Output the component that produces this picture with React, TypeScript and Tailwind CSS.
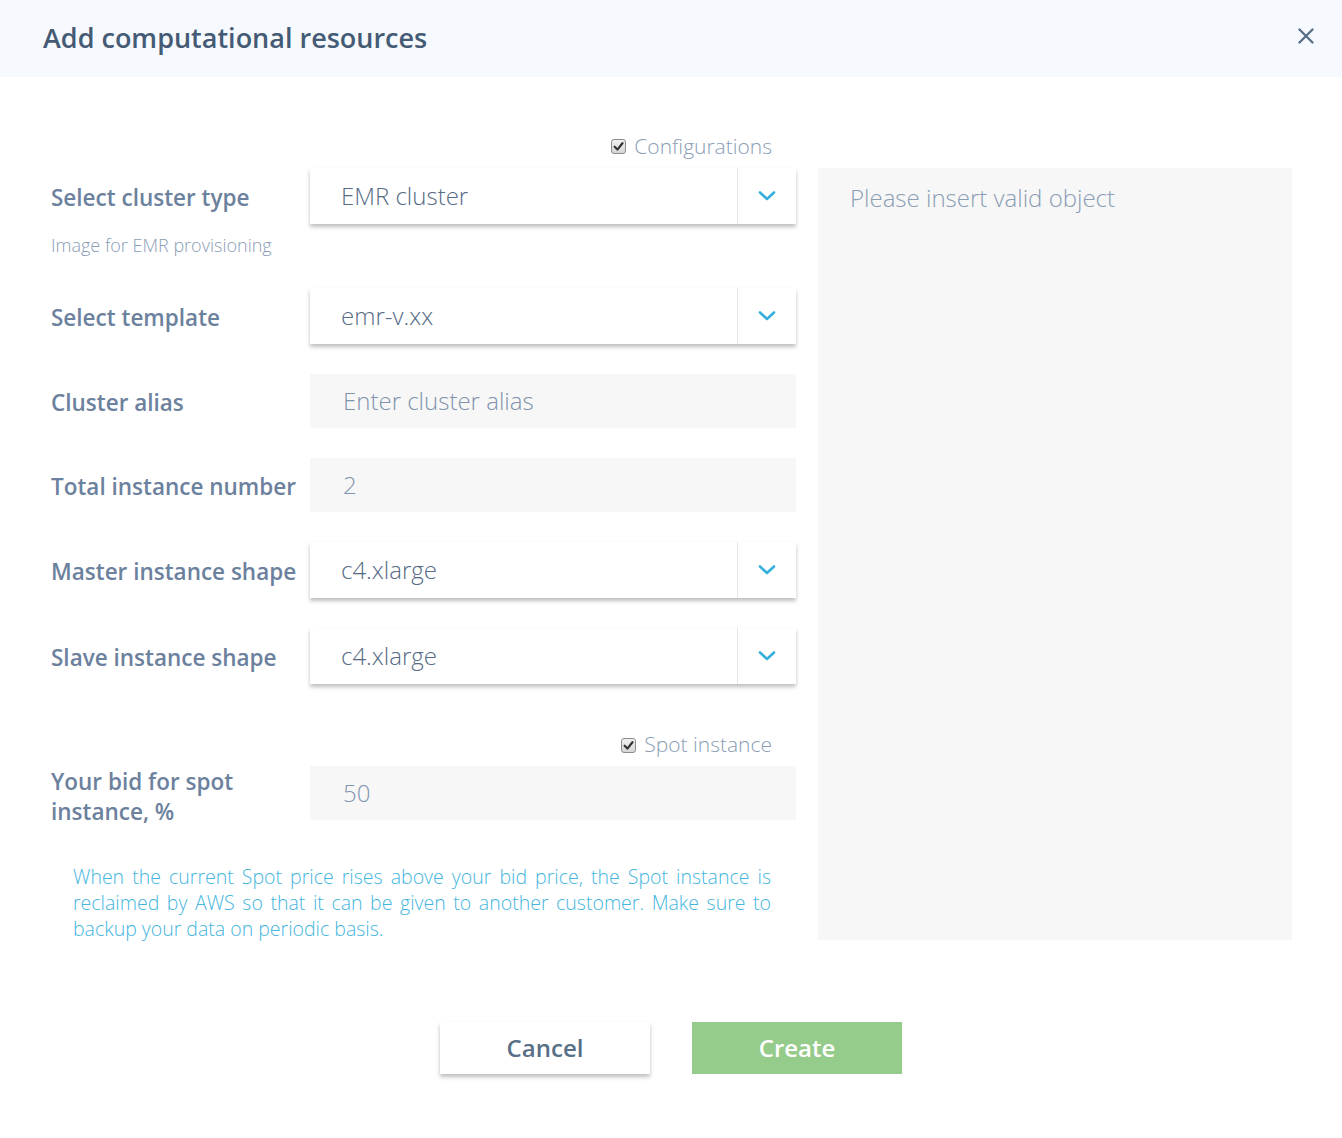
import React from 'react';

const font = { fontFamily: '"Open Sans", "Noto Sans", Arial, sans-serif' };

const Chevron = () => (
  <svg width="18" height="12" viewBox="0 0 18 12" fill="none">
    <path d="M2 2.5 L9 9 L16 2.5" stroke="#35b0dc" strokeWidth="2.6" strokeLinecap="round" strokeLinejoin="round" />
  </svg>
);

const Check = ({ label }: { label: string }) => (
  <div className="flex items-center justify-end gap-[8px] pr-[24px]">
    <span className="flex items-center justify-center w-[15px] h-[15px] rounded-[3px] border border-[#8d8d8d] bg-gradient-to-b from-[#f0f0f0] to-[#d6d6d6]">
      <svg width="11" height="11" viewBox="0 0 10 10">
        <path d="M1.5 5.2 L4 7.8 L8.6 2" stroke="#333" strokeWidth="2" fill="none" strokeLinecap="round" strokeLinejoin="round" />
      </svg>
    </span>
    <span className="text-[21px] font-light text-[#8a9db5]">{label}</span>
  </div>
);

const Select = ({ value }: { value: string }) => (
  <div className="flex h-[56px] bg-white shadow-[0_3px_4px_rgba(0,0,0,0.25)]">
    <div className="flex-1 flex items-center pl-[31px] text-[24px] font-light text-[#566b86]">{value}</div>
    <div className="w-[59px] flex items-center justify-center border-l border-[#e6e6e6]">
      <Chevron />
    </div>
  </div>
);

const Input = ({ value, placeholder }: { value?: string; placeholder?: string }) => (
  <div className="flex h-[54px] items-center bg-[#f7f7f7] pl-[33px] text-[24px] font-light text-[#7f93ad]">
    {value ?? placeholder}
  </div>
);

const Label = ({ children }: { children: React.ReactNode }) => (
  <div className="w-[259px] shrink-0 pt-[3px] text-[22.5px] font-semibold text-[#6c819d]">{children}</div>
);

export default function App() {
  return (
    <div className="w-full min-h-screen bg-white" style={font}>
      {/* header */}
      <div className="h-[77px] bg-[#f6f9fd] flex items-center justify-between pl-[43px] pr-[28px]">
        <h1 className="text-[27px] font-semibold text-[#455b75]">Add computational resources</h1>
        <button className="w-[16px] h-[16px] mb-[5px]">
          <svg width="16" height="16" viewBox="0 0 16 16">
            <path d="M1.5 1.5 L14.5 14.5 M14.5 1.5 L1.5 14.5" stroke="#587087" strokeWidth="2.4" strokeLinecap="round" />
          </svg>
        </button>
      </div>

      {/* body */}
      <div className="flex pl-[51px] pt-[55px]">
        <div className="w-[745px] shrink-0">
          <div className="h-[36px] flex items-center justify-end pb-[7px]">
            <Check label="Configurations" />
          </div>

          <div className="flex items-center">
            <Label>Select cluster type</Label>
            <div className="flex-1"><Select value="EMR cluster" /></div>
          </div>
          <div className="mt-[10px] mb-[32px] h-[22px] leading-[22px] text-[18px] font-light text-[#8a9db5]">
            Image for EMR provisioning
          </div>

          <div className="flex flex-col gap-[30px]">
            <div className="flex items-center">
              <Label>Select template</Label>
              <div className="flex-1"><Select value="emr-v.xx" /></div>
            </div>
            <div className="flex items-center">
              <Label>Cluster alias</Label>
              <div className="flex-1"><Input placeholder="Enter cluster alias" /></div>
            </div>
            <div className="flex items-center">
              <Label>Total instance number</Label>
              <div className="flex-1"><Input value="2" /></div>
            </div>
            <div className="flex items-center">
              <Label>Master instance shape</Label>
              <div className="flex-1"><Select value="c4.xlarge" /></div>
            </div>
            <div className="flex items-center">
              <Label>Slave instance shape</Label>
              <div className="flex-1"><Select value="c4.xlarge" /></div>
            </div>
          </div>

          <div className="mt-[46px] h-[30px] flex items-center justify-end">
            <Check label="Spot instance" />
          </div>
          <div className="mt-[6px] flex items-start">
            <div className="w-[259px] shrink-0 pt-[1px] pr-[20px] text-[22.5px] leading-[30px] font-semibold text-[#6c819d]">
              Your bid for spot instance, %
            </div>
            <div className="flex-1"><Input value="50" /></div>
          </div>

          <p className="mt-[37px] pl-[22px] pr-[25px] text-[19.5px] leading-[26px] font-light text-[#45b6de] text-justify">
            When the current Spot price rises above your bid price, the Spot instance is reclaimed by AWS so that it can be given to another customer. Make sure to backup your data on periodic basis.
          </p>
        </div>

        <div className="ml-[22px] mt-[36px] w-[474px] h-[772px] shrink-0 bg-[#f7f7f7] pl-[32px] pt-[12px] text-[24px] font-light text-[#8a9db5]">
          Please insert valid object
        </div>
      </div>

      {/* footer */}
      <div className="flex justify-center gap-[42px] mt-[80px] pb-[64px]">
        <button className="w-[210px] h-[52px] bg-white shadow-[0_3px_4px_rgba(0,0,0,0.25)] text-[24px] font-semibold text-[#587087]">
          Cancel
        </button>
        <button className="w-[210px] h-[52px] bg-[#96cc8b] text-[24px] font-semibold text-white">
          Create
        </button>
      </div>
    </div>
  );
}
